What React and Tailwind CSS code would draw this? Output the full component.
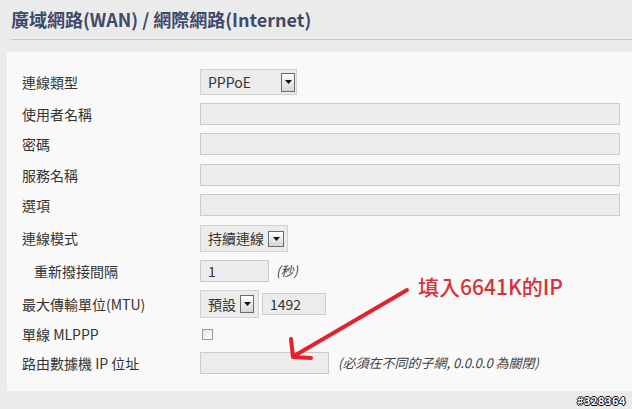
const font = { fontFamily: '"Noto Sans CJK TC", "Noto Sans", sans-serif' };

function Arrow({ w = 14, h = 19 }) {
  return (
    <span
      className="flex items-center justify-center border border-[#6b6b6b] bg-gradient-to-b from-white to-[#d6d6d6]"
      style={{ width: w, height: h }}
    >
      <svg width="7" height="4" viewBox="0 0 7 4">
        <path d="M0 0h7L3.5 4z" fill="#111" />
      </svg>
    </span>
  );
}

function Select({ label, w, h, bw, bh, textW }) {
  return (
    <div
      className="flex items-center border border-[#d2d2d2] bg-[#ececec] pl-[7px] text-[14px] text-[#333]"
      style={{ width: w, height: h }}
    >
      <span style={{ width: textW }}>{label}</span>
      <Arrow w={bw} h={bh} />
    </div>
  );
}

function Input({ w = 420, value }) {
  return (
    <div
      className="flex h-[22px] items-center border border-[#cbcbcb] bg-[#ececec] pl-[7px] text-[14px] text-[#333]"
      style={{ width: w }}
    >
      {value}
    </div>
  );
}

function Row({ label, children, h, mt, indent }) {
  return (
    <div className="flex items-center" style={{ height: h, marginTop: mt }}>
      <div className={`w-[178px] shrink-0 text-[14px] text-[#333] ${indent ? "pl-[12px]" : ""}`}>{label}</div>
      {children}
    </div>
  );
}

export default function App() {
  return (
    <div className="relative flex h-[409px] w-[632px] flex-col overflow-hidden bg-[#ebebeb]" style={font}>
      <div className="pl-[11px] pt-[5px]">
        <h1 className="h-[29px] text-[18px] font-bold leading-[29px] text-[#3d4a6c]">
          廣域網路(WAN) / 網際網路(Internet)
        </h1>
        <div className="mt-[5px] h-px bg-[#c9c9c9]" />
      </div>

      <div className="relative ml-[7px] mt-[12px] flex h-[339px] flex-col bg-[#f9f9f9] pl-[15px] pt-[17px]">
        <Row label="連線類型" h={26} mt={0}>
          <Select label="PPPoE" w={97} h={26} textW={73} bw={14} bh={19} />
        </Row>
        <Row label="使用者名稱" h={22} mt={8}>
          <Input />
        </Row>
        <Row label="密碼" h={22} mt={8}>
          <Input />
        </Row>
        <Row label="服務名稱" h={22} mt={9}>
          <Input />
        </Row>
        <Row label="選項" h={22} mt={8}>
          <Input />
        </Row>
        <Row label="連線模式" h={27} mt={9}>
          <Select label="持續連線" w={88} h={27} textW={60} bw={16} bh={16} />
        </Row>
        <Row label="重新撥接間隔" h={22} mt={8} indent>
          <Input w={69} value="1" />
          <span className="ml-[7px] text-[13px] italic text-[#444]">(秒)</span>
        </Row>
        <Row label="最大傳輸單位(MTU)" h={28} mt={8}>
          <Select label="預設" w={59} h={28} textW={32} bw={14} bh={18} />
          <div className="ml-[3px]">
            <Input w={64} value="1492" />
          </div>
        </Row>
        <Row label="單線 MLPPP" h={16} mt={8}>
          <span className="ml-[2px] h-[11px] w-[11px] border border-[#9a9a9a] bg-gradient-to-br from-[#e2e2e2] to-white" />
        </Row>
        <Row label="路由數據機 IP 位址" h={22} mt={10}>
          <Input w={129} />
          <span className="ml-[9px] text-[13px] italic text-[#444]">(必須在不同的子網, 0.0.0.0 為關閉)</span>
        </Row>

        <div className="absolute left-[411px] top-[222px] text-[21px] font-medium leading-[24px] text-[#d93238]">
          填入6641K的IP
        </div>
        <svg className="absolute left-0 top-0" width="625" height="339" viewBox="0 0 625 339">
          <g stroke="#e3222c" strokeWidth="4" strokeLinecap="round" fill="none">
            <path d="M400 238 L287 304" />
            <path d="M284 287 L286 305 L304 306" strokeLinejoin="round" />
          </g>
        </svg>
      </div>

      <div className="flex flex-1 items-center justify-end pr-[6px]">
        <span
          className="text-[11px] font-bold tracking-[0.5px] text-white"
          style={{ textShadow: "1px 0 0 #000,-1px 0 0 #000,0 1px 0 #000,0 -1px 0 #000" }}
        >
          #328364
        </span>
      </div>
    </div>
  );
}
